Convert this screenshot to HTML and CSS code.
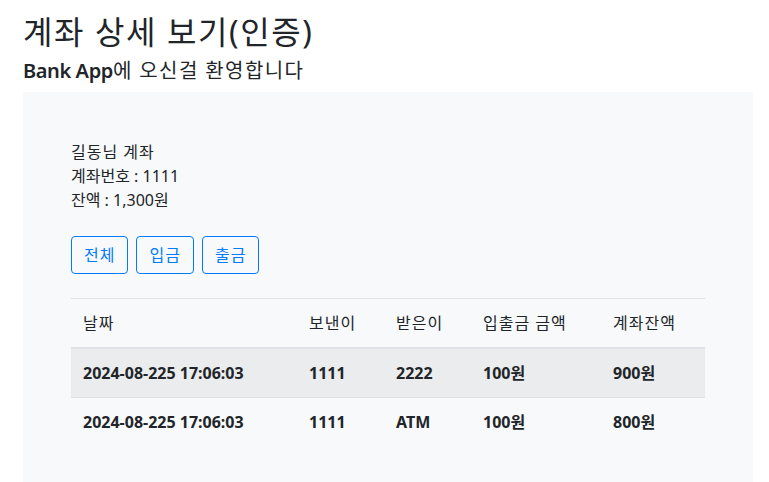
FILE: index.html
```html
<!DOCTYPE html>
<html lang="ko">
<head>
  <meta charset="utf-8">
  <title>계좌 상세 보기</title>
  <link rel="stylesheet" href="styles.css">
</head>
<body>

  <div class="page">
    <h2>계좌 상세 보기(인증)</h2>
    <h5><b>Bank App</b><span class="welcome">에 오신걸 환영합니다</span></h5>

    <div class="panel">
      <div class="info">
        <div class="owner">길동님 계좌</div>
        <div>계좌번호 : 1111</div>
        <div>잔액 : 1,300원</div>
      </div>

      <div class="btn-group">
        <button class="btn">전체</button>
        <button class="btn">입금</button>
        <button class="btn">출금</button>
      </div>

      <table class="history">
        <thead>
          <tr>
            <th class="col-date">날짜</th>
            <th class="col-from">보낸이</th>
            <th class="col-to">받은이</th>
            <th class="col-amount">입출금 금액</th>
            <th>계좌잔액</th>
          </tr>
        </thead>
        <tbody>
          <tr>
            <td>2024-08-225 17:06:03</td>
            <td>1111</td>
            <td>2222</td>
            <td>100원</td>
            <td>900원</td>
          </tr>
          <tr>
            <td>2024-08-225 17:06:03</td>
            <td>1111</td>
            <td>ATM</td>
            <td>100원</td>
            <td>800원</td>
          </tr>
        </tbody>
      </table>
    </div>
  </div>

</body>
</html>
```

FILE: styles.css
```css
body {
  font-family: "Noto Sans", "Noto Sans CJK KR", sans-serif;
  font-size: 16px;
  line-height: 1.5;
  color: #212529;
  background-color: #fff;
  margin: 0;
}

.page {
  padding: 13px 16px 0 23px;
}

h2 {
  font-size: 32px;
  font-weight: 400;
  line-height: 1.2;
  letter-spacing: 0.05em;
  margin: 0 0 8px 0;
}

h5 {
  font-size: 20px;
  font-weight: 400;
  line-height: 1.2;
  margin: 0 0 9px 0;
}

h5 b {
  font-weight: 600;
  letter-spacing: -0.02em;
}

/* 한글 글자폭 보정 */
.welcome {
  letter-spacing: 0.07em;
}

.owner {
  letter-spacing: 1px;
}

.panel {
  background-color: #f8f9fa;
  padding: 48px;
}

.btn-group {
  display: flex;
  gap: 8px;
  margin-top: 24px;
}

.btn {
  font-family: inherit;
  font-size: 16px;
  line-height: 24px;
  letter-spacing: 1px;
  padding: 6px 12px;
  color: #007bff;
  background-color: transparent;
  border: 1px solid #007bff;
  border-radius: 4px;
  cursor: pointer;
}

.history {
  width: 100%;
  border-collapse: collapse;
  margin-top: 24px;
  margin-bottom: 16px;
}

.history th,
.history td {
  box-sizing: border-box;
  padding: 12px;
  text-align: left;
  vertical-align: top;
  white-space: nowrap;
  border-top: 1px solid #dee2e6;
}

.history th {
  font-weight: 400;
  letter-spacing: 1px;
  border-bottom: 2px solid #dee2e6;
}

.history td {
  font-weight: 700;
}

.history tbody tr:nth-child(odd) {
  background-color: rgba(0, 0, 0, 0.05);
}

.col-date {
  width: 226px;
}

.col-from,
.col-to {
  width: 87px;
}

.col-amount {
  width: 130px;
}
```
